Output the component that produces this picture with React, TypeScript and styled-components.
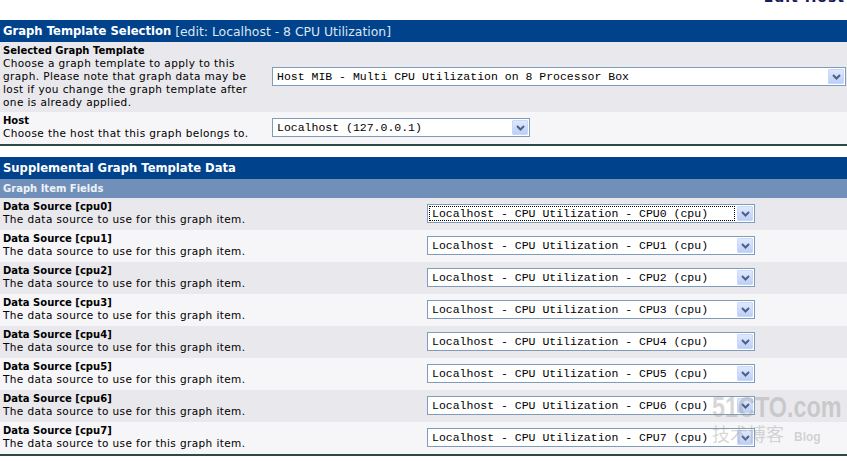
import styled, { createGlobalStyle } from "styled-components";

const GlobalStyle = createGlobalStyle`
  html, body {
    margin: 0;
    padding: 0;
    background: #fff;
  }
  body {
    font-family: "DejaVu Sans", Verdana, sans-serif;
    font-size: 10px;
    color: #000;
  }
`;

const Page = styled.div`
  position: relative;
  width: 847px;
  height: 461px;
  overflow: hidden;
  background: #fff;
`;

const TopBar = styled.div`
  height: 20px;
  overflow: hidden;
  display: flex;
  justify-content: flex-end;
  padding-right: 2px;
`;

const TopLink = styled.span`
  margin-top: -11px;
  font-family: "DejaVu Sans", Verdana, sans-serif;
  font-size: 14px;
  font-weight: bold;
  color: #1a1a5a;
  letter-spacing: 1px;
`;

const Section = styled.div`
  border-bottom: 2px solid #2c4b44;
`;

const Header = styled.div`
  height: 22px;
  display: flex;
  align-items: center;
  padding-left: 3px;
  background: #00438c;
  color: #fff;
  font-size: 11.6px;
  white-space: nowrap;
`;

const HeaderTitle = styled.b`
  font-weight: bold;
  margin-right: 4px;
`;

const HeaderNote = styled.span`
  color: #dde6f3;
  font-size: 12.4px;
`;

const SubHeader = styled.div`
  height: 19px;
  display: flex;
  align-items: center;
  padding-left: 3px;
  background: #7190b9;
  color: #eef2f8;
  font-weight: bold;
  font-size: 10px;
`;

const Row = styled.div<{ $alt?: boolean; $labelWidth: number }>`
  display: grid;
  grid-template-columns: ${({ $labelWidth }) => $labelWidth}px 1fr;
  align-items: center;
  min-height: 32px;
  box-sizing: border-box;
  padding: 2px 0 3px 3px;
  background: ${({ $alt }) => ($alt ? "#f6f5f8" : "#e9e8ec")};
  line-height: 13px;
`;

const Label = styled.div`
  display: flex;
  flex-direction: column;
  align-self: start;
`;

const LabelTitle = styled.span`
  font-weight: bold;
`;

const LabelText = styled.span<{ $maxWidth?: number }>`
  max-width: ${({ $maxWidth }) => ($maxWidth ? `${$maxWidth}px` : "none")};
  font-size: 10.5px;
  letter-spacing: 0.4px;
  white-space: ${({ $maxWidth }) => ($maxWidth ? "normal" : "nowrap")};
`;

const Select = styled.div<{ $width: number }>`
  width: ${({ $width }) => $width}px;
  height: 19px;
  box-sizing: border-box;
  display: flex;
  align-items: center;
  border: 1px solid #7f9db9;
  background: #fff;
  padding: 1px;
`;

const SelectText = styled.span<{ $focused?: boolean }>`
  flex: 1;
  height: 15px;
  display: flex;
  align-items: center;
  padding-left: 3px;
  margin-right: 2px;
  font-family: "Liberation Mono", "DejaVu Sans Mono", monospace;
  font-size: 11.5px;
  white-space: pre;
  color: #000;
  outline: ${({ $focused }) => ($focused ? "1px dotted #000" : "none")};
  outline-offset: -1px;
`;

const Arrow = styled.span`
  width: 16px;
  height: 15px;
  display: flex;
  align-items: center;
  justify-content: center;
  background: linear-gradient(#dfe8fd, #bccff8);
  border: 1px solid #c8d7fc;
  box-sizing: border-box;
  border-radius: 1px;
`;

const Watermark = styled.div`
  position: absolute;
  left: 712px;
  top: 392px;
  color: rgba(150, 150, 150, 0.4);
  font-family: "Liberation Sans", Arial, sans-serif;
  pointer-events: none;
  line-height: 1;
`;

const WatermarkBig = styled.div`
  font-size: 30px;
  font-weight: bold;
  transform: scaleX(0.78);
  transform-origin: left center;
  white-space: nowrap;
`;

const WatermarkSmall = styled.div`
  display: flex;
  align-items: baseline;
  gap: 10px;
  font-family: "Noto Sans CJK SC", sans-serif;
  font-size: 18px;
  margin-top: 2px;
`;

const WatermarkBlog = styled.span`
  font-family: "Liberation Sans", Arial, sans-serif;
  font-size: 12px;
  font-weight: bold;
`;

const Gap = styled.div`
  height: 11px;
`;

const ArrowIcon = () => (
  <svg width="9" height="6" viewBox="0 0 9 6">
    <path d="M1 1 L4.5 4.5 L8 1" fill="none" stroke="#4d6185" strokeWidth="2" />
  </svg>
);

const Dropdown = ({
  value,
  width,
  focused,
}: {
  value: string;
  width: number;
  focused?: boolean;
}) => (
  <Select $width={width}>
    <SelectText $focused={focused}>{value}</SelectText>
    <Arrow>
      <ArrowIcon />
    </Arrow>
  </Select>
);

const cpus = [0, 1, 2, 3, 4, 5, 6, 7];

export default function App() {
  return (
    <Page>
      <GlobalStyle />
      <TopBar>
        <TopLink>*Edit Host</TopLink>
      </TopBar>
      <Section>
        <Header>
          <HeaderTitle>Graph Template Selection</HeaderTitle>
          <HeaderNote>[edit: Localhost - 8 CPU Utilization]</HeaderNote>
        </Header>
        <Row $labelWidth={269}>
          <Label>
            <LabelTitle>Selected Graph Template</LabelTitle>
            <LabelText $maxWidth={250}>
              Choose a graph template to apply to this graph. Please note that graph data
              may be lost if you change the graph template after one is already applied.
            </LabelText>
          </Label>
          <Dropdown value="Host MIB - Multi CPU Utilization on 8 Processor Box" width={574} />
        </Row>
        <Row $alt $labelWidth={269}>
          <Label>
            <LabelTitle>Host</LabelTitle>
            <LabelText>Choose the host that this graph belongs to.</LabelText>
          </Label>
          <Dropdown value="Localhost (127.0.0.1)" width={258} />
        </Row>
      </Section>
      <Gap />
      <Section>
        <Header>
          <HeaderTitle>Supplemental Graph Template Data</HeaderTitle>
        </Header>
        <SubHeader>Graph Item Fields</SubHeader>
        {cpus.map((n) => (
          <Row key={n} $alt={n % 2 === 1} $labelWidth={424}>
            <Label>
              <LabelTitle>Data Source [cpu{n}]</LabelTitle>
              <LabelText>The data source to use for this graph item.</LabelText>
            </Label>
            <Dropdown
              value={`Localhost - CPU Utilization - CPU${n} (cpu)`}
              width={328}
              focused={n === 0}
            />
          </Row>
        ))}
      </Section>
      <Watermark>
        <WatermarkBig>51CTO.com</WatermarkBig>
        <WatermarkSmall>
          <span>技术博客</span>
          <WatermarkBlog>Blog</WatermarkBlog>
        </WatermarkSmall>
      </Watermark>
    </Page>
  );
}
